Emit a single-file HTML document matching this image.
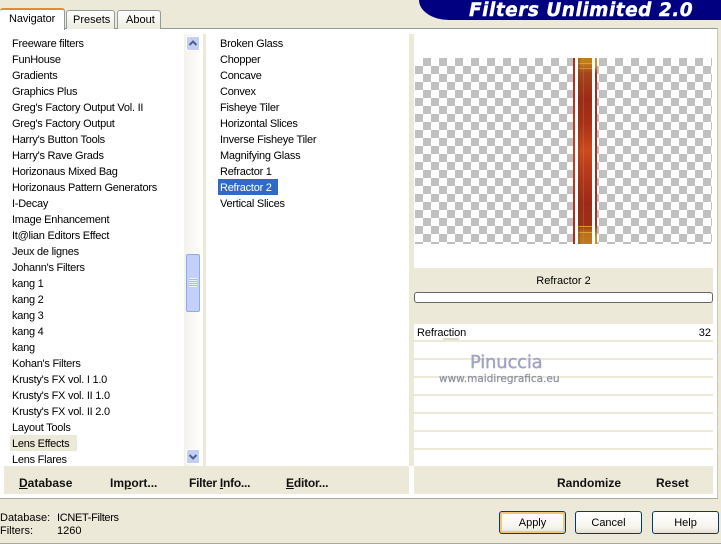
<!DOCTYPE html>
<html><head><meta charset="utf-8">
<style>
html,body{margin:0;padding:0}
body{width:721px;height:544px;position:relative;overflow:hidden;background:#ECE9D8;font-family:"Liberation Sans",sans-serif;font-size:11px;color:#000}
.a{position:absolute}
.t{position:absolute;white-space:nowrap;line-height:16px;height:16px}
.list div{height:16px;line-height:18px;white-space:nowrap;padding-left:8px;letter-spacing:-.25px}
.b{position:absolute;font-weight:bold;font-size:12px;white-space:nowrap;color:#111}
.btn{position:absolute;top:511px;height:23px;width:67px;box-sizing:border-box;border:1px solid #003C74;border-radius:3px;background:linear-gradient(#fff,#f6f5ee 70%,#e3e0d2);text-align:center;line-height:23px;font-size:11px}
.row{position:absolute;left:414px;width:299px;height:2px;background:#ECE9D8}
</style></head><body>
<!-- header -->
<div class="a" style="left:419px;top:0;width:302px;height:20px;background:#000080;border-bottom-left-radius:30px 20px"></div>
<div class="t" style="left:469px;top:1px;height:20px;line-height:19px;font-family:'DejaVu Sans',sans-serif;font-weight:bold;font-style:italic;font-size:18.5px;letter-spacing:.5px;color:#fff;-webkit-text-stroke:.4px #fff">Filters Unlimited 2.0</div>

<!-- panel -->
<div class="a" style="left:0;top:28px;width:718px;height:471px;background:#fff;border-top:1px solid #919B9C;border-bottom:1px solid #A9A99F;border-right:1px solid #C9C7BA;box-sizing:border-box"></div>
<div class="a" style="left:203px;top:34px;width:3px;height:432px;background:#ECE9D8"></div>
<div class="a" style="left:409px;top:34px;width:5px;height:432px;background:#ECE9D8"></div>

<!-- tabs -->
<div class="a" style="left:0;top:8px;width:65px;height:22px;background:#fff;border-top:2px solid #E68B2C;box-sizing:border-box;border-radius:3px 3px 0 0;border-right:1px solid #919B9C;z-index:2"></div>
<div class="t" style="left:9px;top:11px;z-index:3;letter-spacing:-.1px">Navigator</div>
<div class="a" style="left:66px;top:10px;width:49px;height:19px;box-sizing:border-box;border:1px solid #919B9C;border-bottom:0;border-radius:3px 3px 0 0;background:linear-gradient(#fff,#ECEBE0)"></div>
<div class="t" style="left:73px;top:12px">Presets</div>
<div class="a" style="left:117px;top:10px;width:44px;height:19px;box-sizing:border-box;border:1px solid #919B9C;border-bottom:0;border-radius:3px 3px 0 0;background:linear-gradient(#fff,#ECEBE0)"></div>
<div class="t" style="left:126px;top:12px">About</div>

<!-- left list -->
<div class="a list" style="left:4px;top:35px;width:180px;height:431px;overflow:hidden">
<div>Freeware filters</div><div>FunHouse</div><div>Gradients</div><div>Graphics Plus</div><div>Greg's Factory Output Vol. II</div><div>Greg's Factory Output</div><div>Harry's Button Tools</div><div>Harry's Rave Grads</div><div>Horizonaus Mixed Bag</div><div>Horizonaus Pattern Generators</div><div>I-Decay</div><div>Image Enhancement</div><div>It@lian Editors Effect</div><div>Jeux de lignes</div><div>Johann's Filters</div><div>kang 1</div><div>kang 2</div><div>kang 3</div><div>kang 4</div><div>kang</div><div>Kohan's Filters</div><div>Krusty's FX vol. I 1.0</div><div>Krusty's FX vol. II 1.0</div><div>Krusty's FX vol. II 2.0</div><div>Layout Tools</div><div style="background:#ECE9D8;width:65px;margin-left:6px;padding-left:2px">Lens Effects</div><div>Lens Flares</div>
</div>

<!-- scrollbar -->
<div class="a" style="left:184px;top:34px;width:17px;height:432px;background:linear-gradient(90deg,#F3F1EC,#FEFEFB)"></div>
<div class="a" style="left:186px;top:36px;width:14px;height:15px;box-sizing:border-box;border:1px solid #fff;border-radius:2px;background:#C2D0F8"></div>
<svg class="a" style="left:186px;top:36px" width="14" height="15"><path d="M3.5 9 L7 5.5 L10.500 9" fill="none" stroke="#4D6185" stroke-width="2"/></svg>
<div class="a" style="left:186px;top:254px;width:14px;height:58px;box-sizing:border-box;border:1px solid #8FA9EE;border-radius:2px;background:#C2D0FA"></div>
<div class="a" style="left:189px;top:278px;width:8px;height:9px;background:repeating-linear-gradient(#EEF2FE 0 1px,#A5B8EC 1px 2px)"></div>
<div class="a" style="left:186px;top:449px;width:14px;height:15px;box-sizing:border-box;border:1px solid #fff;border-radius:2px;background:#C2D0F8"></div>
<svg class="a" style="left:186px;top:449px" width="14" height="15"><path d="M3.500 6 L7 9.500 L10.500 6" fill="none" stroke="#4D6185" stroke-width="2"/></svg>

<!-- mid list -->
<div class="a list" style="left:212px;top:35px;width:190px">
<div>Broken Glass</div><div>Chopper</div><div>Concave</div><div>Convex</div><div>Fisheye Tiler</div><div>Horizontal Slices</div><div>Inverse Fisheye Tiler</div><div>Magnifying Glass</div><div>Refractor 1</div><div style="background:#316AC5;color:#fff;width:58px;margin-left:6px;padding-left:2px">Refractor 2</div><div>Vertical Slices</div>
</div>

<!-- checker preview -->
<div class="a" style="left:415px;top:58px;width:297px;height:186px;background-color:#fff;background-image:conic-gradient(#C0C0C0 25%,#fff 0 50%,#C0C0C0 0 75%,#fff 0);background-size:16px 16px;background-position:8px 8px"></div>
<div class="a" style="left:573px;top:58px;width:2px;height:186px;background:linear-gradient(#A5301A,#C04020 50%,#A32B18)"></div>
<div class="a" style="left:575px;top:58px;width:3px;height:186px;background:#fff"></div>
<div class="a" style="left:578px;top:58px;width:14px;height:186px;background:linear-gradient(#C07A20 0,#C07A20 3%,#A5461C 8%,#9C2A18 22%,#A83018 35%,#CC4A20 50%,#B83A1C 60%,#9C2A18 78%,#9C3018 90%,#B8701E 94%,#C07A20 100%)"></div>
<div class="a" style="left:592px;top:58px;width:3px;height:186px;background:#fff"></div>
<div class="a" style="left:595px;top:58px;width:2px;height:186px;background:linear-gradient(#D09020 0,#D09020 4%,#A5301A 8%,#A5301A 90%,#D09020 96%)"></div>
<div class="a" style="left:578px;top:63px;width:14px;height:1px;background:#D8A030"></div>
<div class="a" style="left:578px;top:68px;width:14px;height:1px;background:#C89030"></div>
<div class="a" style="left:578px;top:226px;width:14px;height:1px;background:#D8A030"></div>
<div class="a" style="left:578px;top:232px;width:14px;height:1px;background:#D8A030"></div>
<div class="a" style="left:583px;top:58px;width:1px;height:186px;background:rgba(220,150,50,.28)"></div>
<div class="a" style="left:578px;top:58px;width:2px;height:186px;background:rgba(120,60,20,.3)"></div>

<!-- right info -->
<div class="a" style="left:414px;top:268px;width:299px;height:56px;background:#ECE9D8"></div>
<div class="t" style="left:414px;width:299px;top:273px;text-align:center">Refractor 2</div>
<div class="a" style="left:414px;top:292px;width:299px;height:11px;box-sizing:border-box;border:1px solid #666;border-radius:3px;background:#fff"></div>
<div class="t" style="left:417px;top:325px;letter-spacing:-.1px">Refraction</div>
<div class="t" style="left:680px;width:31px;top:325px;text-align:right">32</div>
<div class="row" style="top:340px"></div>
<div class="row" style="top:358px"></div>
<div class="row" style="top:376px"></div>
<div class="row" style="top:394px"></div>
<div class="row" style="top:412px"></div>
<div class="row" style="top:430px"></div>
<div class="row" style="top:448px"></div>
<div class="a" style="left:443px;top:338px;width:16px;height:2px;background:#E2DCC6"></div>

<!-- watermark -->
<div class="t" style="left:470px;top:352px;height:22px;line-height:22px;font-family:'DejaVu Sans',sans-serif;font-size:18px;letter-spacing:-.2px;color:#A0A3C4;-webkit-text-stroke:.4px #A0A3C4">Pinuccia</div>
<div class="t" style="left:439px;top:371px;font-family:'DejaVu Sans',sans-serif;font-size:10.500px;color:#8C8FA3;-webkit-text-stroke:.2px #8C8FA3">www.maidiregrafica.eu</div>

<!-- bottom bars -->
<div class="a" style="left:4px;top:466px;width:405px;height:28px;background:#ECE9D8"></div>
<div class="a" style="left:414px;top:466px;width:299px;height:28px;background:#ECE9D8"></div>
<div class="b" style="left:19px;top:476px"><u>D</u>atabase</div>
<div class="b" style="left:110px;top:476px">Im<u>p</u>ort...</div>
<div class="b" style="left:189px;top:476px;letter-spacing:-.25px">Filter <u>I</u>nfo...</div>
<div class="b" style="left:286px;top:476px;letter-spacing:-.2px"><u>E</u>ditor...</div>
<div class="b" style="left:557px;top:476px">Randomize</div>
<div class="b" style="left:656px;top:476px">Reset</div>

<!-- status -->
<div class="t" style="left:0;top:510px">Database:</div>
<div class="t" style="left:57px;top:510px;letter-spacing:-.33px">ICNET-Filters</div>
<div class="t" style="left:0;top:523px">Filters:</div>
<div class="t" style="left:57px;top:523px">1260</div>

<!-- buttons -->
<div class="btn" style="left:499px;box-shadow:inset 0 0 0 2px #F4C678">Apply</div>
<div class="btn" style="left:575px">Cancel</div>
<div class="btn" style="left:652px">Help</div>
<div class="a" style="left:0;top:543px;width:721px;height:1px;background:#A9A99F"></div>
</body></html>
